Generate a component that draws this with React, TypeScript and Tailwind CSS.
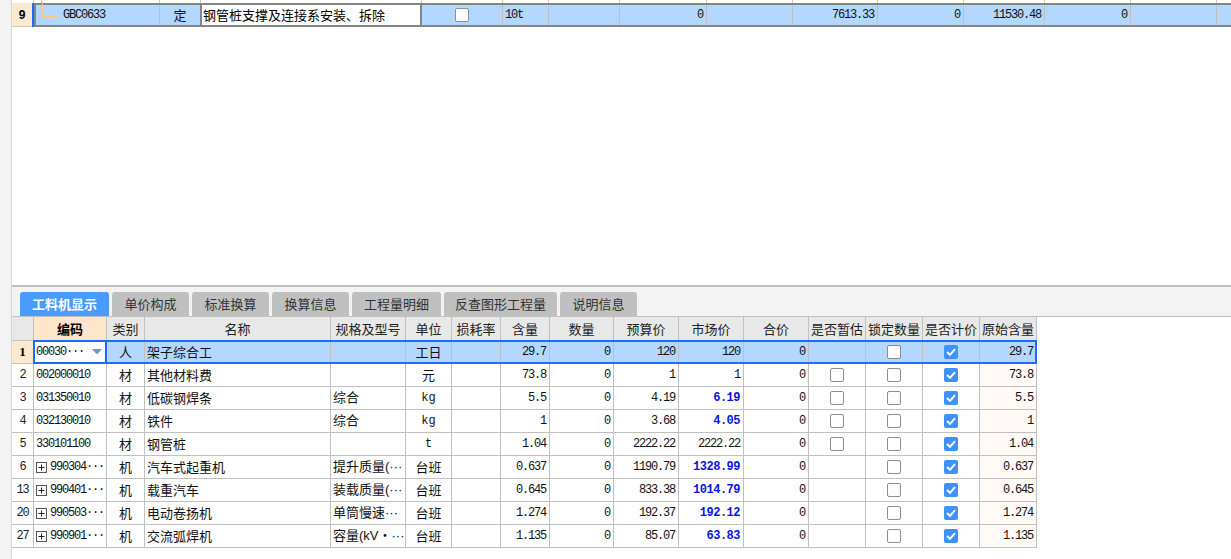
import React from "react";

const CN = "font-['Noto_Sans_CJK_SC',sans-serif]";
const MIX = "font-['Liberation_Sans','Noto_Sans_CJK_SC',sans-serif]";
const NUM = "font-['Liberation_Mono','Noto_Sans_CJK_SC',monospace] text-[12px] tracking-[-1.2px]";
const BLUE_NUM =
  "font-['Liberation_Mono','Noto_Sans_CJK_SC',monospace] text-[12px] font-bold tracking-[-0.5px] text-[#0a14e6]";

const W = [
  "w-[22px]",
  "w-[73px]",
  "w-[38px]",
  "w-[186px]",
  "w-[75px]",
  "w-[46px]",
  "w-[49px]",
  "w-[49px]",
  "w-[64px]",
  "w-[65px]",
  "w-[65px]",
  "w-[65px]",
  "w-[57px]",
  "w-[57px]",
  "w-[57px]",
  "w-[57px]",
];

const HEADERS = [
  "",
  "编码",
  "类别",
  "名称",
  "规格及型号",
  "单位",
  "损耗率",
  "含量",
  "数量",
  "预算价",
  "市场价",
  "合价",
  "是否暂估",
  "锁定数量",
  "是否计价",
  "原始含量",
];

type Row = {
  no: string;
  code: string;
  tree?: boolean;
  type: string;
  name: string;
  spec: string;
  unit: string;
  qty: string;
  budget: string;
  market: string;
  marketBlue?: boolean;
  est: boolean;
};

const ROWS: Row[] = [
  { no: "1", code: "00030···", type: "人", name: "架子综合工", spec: "", unit: "工日", qty: "29.7", budget: "120", market: "120", est: false },
  { no: "2", code: "002000010", type: "材", name: "其他材料费", spec: "", unit: "元", qty: "73.8", budget: "1", market: "1", est: true },
  { no: "3", code: "031350010", type: "材", name: "低碳钢焊条", spec: "综合", unit: "kg", qty: "5.5", budget: "4.19", market: "6.19", marketBlue: true, est: true },
  { no: "4", code: "032130010", type: "材", name: "铁件", spec: "综合", unit: "kg", qty: "1", budget: "3.68", market: "4.05", marketBlue: true, est: true },
  { no: "5", code: "330101100", type: "材", name: "钢管桩", spec: "", unit: "t", qty: "1.04", budget: "2222.22", market: "2222.22", est: true },
  { no: "6", code: "990304···", tree: true, type: "机", name: "汽车式起重机", spec: "提升质量(···", unit: "台班", qty: "0.637", budget: "1190.79", market: "1328.99", marketBlue: true, est: false },
  { no: "13", code: "990401···", tree: true, type: "机", name: "载重汽车", spec: "装载质量(···", unit: "台班", qty: "0.645", budget: "833.38", market: "1014.79", marketBlue: true, est: false },
  { no: "20", code: "990503···", tree: true, type: "机", name: "电动卷扬机", spec: "单筒慢速···", unit: "台班", qty: "1.274", budget: "192.37", market: "192.12", marketBlue: true, est: false },
  { no: "27", code: "990901···", tree: true, type: "机", name: "交流弧焊机", spec: "容量(kV・···", unit: "台班", qty: "1.135", budget: "85.07", market: "63.83", marketBlue: true, est: false },
];

const TABS = ["工料机显示", "单价构成", "标准换算", "换算信息", "工程量明细", "反查图形工程量", "说明信息"];
const TAB_W = ["w-[89px]", "w-[77px]", "w-[77px]", "w-[77px]", "w-[89px]", "w-[113px]", "w-[77px]"];

function Check({ checked }: { checked: boolean }) {
  if (checked) {
    return (
      <span className="flex h-[14px] w-[14px] items-center justify-center rounded-[2px] bg-[#3e92ff]">
        <svg width="10" height="8" viewBox="0 0 10 8">
          <path d="M1 4 L4 6.8 L9 1.2" fill="none" stroke="#fff" strokeWidth="2" />
        </svg>
      </span>
    );
  }
  return <span className="h-[14px] w-[14px] rounded-[2px] border border-[#8e8e8e] bg-white" />;
}

function PlusBox() {
  return (
    <svg width="11" height="11" viewBox="0 0 11 11" className="mr-[3px] shrink-0">
      <rect x="0.5" y="0.5" width="10" height="10" fill="#fff" stroke="#555" />
      <path d="M2.5 5.5 H8.5 M5.5 2.5 V8.5" stroke="#222" />
    </svg>
  );
}

const cell = "flex h-full shrink-0 items-center border-r border-b border-[#c0c0c0]";

function TopRow() {
  const line = "h-full shrink-0 border-r border-[#c8c8c8]";
  return (
    <div className="h-[285px] bg-white">
      {/* tail of previous row */}
      <div className="flex h-[3px]">
        <div className="w-[22px] shrink-0 border-r border-[#c8c8c8]" />
        <div className="relative w-[126px] shrink-0 border-r border-[#c8c8c8]">
          <div className="absolute left-[7px] top-0 h-full w-px bg-[#ffc47c]" />
        </div>
        <div className={`${line} w-[41px]`} />
        <div className={`${line} w-[221px]`} />
        <div className={`${line} w-[81px]`} />
        <div className={`${line} w-[46px]`} />
        <div className={`${line} w-[71px]`} />
        <div className={`${line} w-[87px]`} />
        <div className={`${line} w-[86px]`} />
        <div className={`${line} w-[85px]`} />
        <div className={`${line} w-[86px]`} />
        <div className={`${line} w-[81px]`} />
        <div className={`${line} w-[86px]`} />
        <div className={`${line} w-[86px]`} />
      </div>
      <div className="flex h-[24px]">
        <div className="flex w-[20px] shrink-0 items-center justify-center border-b border-[#d8c8b0] bg-[#fde9d0] font-['Liberation_Sans',sans-serif] text-[12px] font-bold text-black">
          9
        </div>
        <div className="w-[2px] shrink-0 bg-[#1a6cff]" />
        <div className="flex flex-1 border-y-2 border-l-2 border-[#858585] bg-[#b3d7ff] text-[#111]">
          <div className="relative flex w-[124px] shrink-0 items-center border-r border-[#c0c0c0]">
            <div className="absolute left-[6px] top-[-3px] h-[15px] w-px bg-[#ffc47c]" />
            <div className="absolute left-[6px] top-[11px] h-px w-[16px] bg-[#ffc47c]" />
            <span className={`${NUM} pl-[27px]`}>GBC0633</span>
          </div>
          <div className={`flex w-[40px] shrink-0 items-center justify-center ${CN} text-[13px]`}>定</div>
          <div className={`flex w-[222px] shrink-0 items-center border-x-2 border-[#858585] bg-white pl-[1px] ${CN} text-[13px] text-black`}>
            钢管桩支撑及连接系安装、拆除
          </div>
          <div className="flex w-[81px] shrink-0 items-center justify-center border-r border-[#c0c0c0]">
            <Check checked={false} />
          </div>
          <div className={`flex w-[46px] shrink-0 items-center border-r border-[#c0c0c0] pl-[2px] ${NUM}`}>10t</div>
          <div className="w-[71px] shrink-0 border-r border-[#c0c0c0]" />
          <div className={`flex w-[87px] shrink-0 items-center justify-end border-r border-[#c0c0c0] pr-[3px] ${NUM}`}>0</div>
          <div className="w-[86px] shrink-0 border-r border-[#c0c0c0]" />
          <div className={`flex w-[85px] shrink-0 items-center justify-end border-r border-[#c0c0c0] pr-[3px] ${NUM}`}>7613.33</div>
          <div className={`flex w-[86px] shrink-0 items-center justify-end border-r border-[#c0c0c0] pr-[3px] ${NUM}`}>0</div>
          <div className={`flex w-[81px] shrink-0 items-center justify-end border-r border-[#c0c0c0] pr-[3px] ${NUM}`}>11530.48</div>
          <div className={`flex w-[86px] shrink-0 items-center justify-end border-r border-[#c0c0c0] pr-[3px] ${NUM}`}>0</div>
          <div className="w-[86px] shrink-0 border-r border-[#c0c0c0]" />
          <div className="flex-1" />
        </div>
      </div>
    </div>
  );
}

function Tabs() {
  return (
    <div className="flex h-[32px] gap-[3px] border-t-2 border-b border-[#c0c0c0] bg-[#f3f3f3] pl-[8px] pt-[5px]">
      {TABS.map((t, i) => (
        <div
          key={t}
          className={`flex h-[24px] shrink-0 items-center justify-center rounded-t-[3px] ${TAB_W[i]} ${CN} text-[13px] ${
            i === 0 ? "bg-[#4a9bff] font-bold text-white" : "bg-[#c0c0c0] text-[#333]"
          }`}
        >
          {t}
        </div>
      ))}
    </div>
  );
}

function Header() {
  return (
    <div className="flex h-[24px]">
      {HEADERS.map((h, i) => (
        <div
          key={i}
          className={`${cell} ${W[i]} justify-center ${CN} text-[13px] ${
            i === 1 ? "bg-[#fde6c9] font-bold text-black" : "bg-[#e8e8e8] text-[#222]"
          }`}
        >
          {h}
        </div>
      ))}
    </div>
  );
}

function DataRow({ r, sel }: { r: Row; sel: boolean }) {
  const bg = sel ? "bg-[#b3d7ff]" : "bg-white";
  return (
    <div className="relative flex h-[23px] text-[#111]">
      <div
        className={`${cell} ${W[0]} justify-center ${
          sel
            ? "bg-[#fde9d0] font-['Liberation_Serif',serif] text-[13px] font-bold text-black"
            : `bg-white ${NUM} text-[#222]`
        }`}
      >
        {r.no}
      </div>
      <div className={`${cell} ${W[1]} bg-white pl-[2px] ${NUM}`}>
        {r.tree && <PlusBox />}
        <span>{r.code}</span>
        {sel && (
          <svg width="10" height="6" viewBox="0 0 10 6" className="ml-auto mr-[4px]">
            <path d="M0 0 H10 L5 5.5 Z" fill="#7597bd" />
          </svg>
        )}
      </div>
      <div className={`${cell} ${W[2]} ${bg} justify-center ${CN} text-[13px]`}>{r.type}</div>
      <div className={`${cell} ${W[3]} ${bg} pl-[2px] ${CN} text-[13px]`}>{r.name}</div>
      <div className={`${cell} ${W[4]} ${bg} overflow-hidden whitespace-nowrap pl-[2px] ${MIX} text-[13px]`}>{r.spec}</div>
      <div
        className={`${cell} ${W[5]} ${bg} justify-center ${
          /[a-z]/.test(r.unit) ? `${NUM} tracking-[0px]` : `${CN} text-[13px]`
        }`}
      >
        {r.unit}
      </div>
      <div className={`${cell} ${W[6]} ${bg}`} />
      <div className={`${cell} ${W[7]} ${bg} justify-end pr-[3px] ${NUM}`}>{r.qty}</div>
      <div className={`${cell} ${W[8]} ${bg} justify-end pr-[3px] ${NUM}`}>0</div>
      <div className={`${cell} ${W[9]} ${bg} justify-end pr-[3px] ${NUM}`}>{r.budget}</div>
      <div className={`${cell} ${W[10]} ${bg} justify-end pr-[3px] ${r.marketBlue ? BLUE_NUM : NUM}`}>{r.market}</div>
      <div className={`${cell} ${W[11]} ${bg} justify-end pr-[3px] ${NUM}`}>0</div>
      <div className={`${cell} ${W[12]} ${bg} justify-center`}>{r.est && <Check checked={false} />}</div>
      <div className={`${cell} ${W[13]} ${bg} justify-center`}>
        <Check checked={false} />
      </div>
      <div className={`${cell} ${W[14]} ${bg} justify-center`}>
        <Check checked />
      </div>
      <div className={`${cell} ${W[15]} ${sel ? bg : "bg-[#fffaf5]"} justify-end pr-[3px] ${NUM}`}>{r.qty}</div>
      {sel && (
        <>
          <div className="pointer-events-none absolute left-[21px] top-[-1px] h-[24px] w-[1004px] border-2 border-[#1a6cff]" />
          <div className="pointer-events-none absolute left-[93px] top-[-1px] h-[24px] w-[2px] bg-[#1a6cff]" />
        </>
      )}
    </div>
  );
}

export default function App() {
  return (
    <div className="flex h-[559px] w-[1231px] overflow-hidden bg-white">
      <div className="w-[12px] shrink-0 border-r border-[#d6d6d6] bg-[#f3f3f3]" />
      <div className="flex min-w-0 flex-1 flex-col">
        <TopRow />
        <Tabs />
        <Header />
        {ROWS.map((r, i) => (
          <DataRow key={r.no} r={r} sel={i === 0} />
        ))}
      </div>
    </div>
  );
}
